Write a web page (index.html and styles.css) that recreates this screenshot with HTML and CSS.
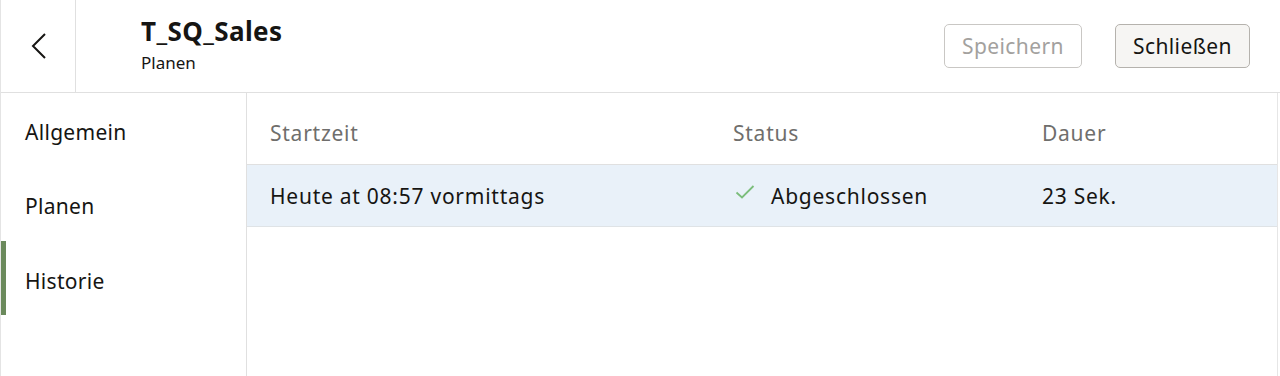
FILE: index.html
```html
<!DOCTYPE html>
<html lang="de">
<head>
<meta charset="utf-8">
<title>T_SQ_Sales</title>
<link rel="stylesheet" href="styles.css">
</head>
<body>
<div class="page">
  <header class="header">
    <div class="back">
      <svg width="16" height="26" viewBox="0 0 16 26"><path d="M14 1 L2 13 L14 25" fill="none" stroke="#161513" stroke-width="2"/></svg>
    </div>
    <div class="titles">
      <div class="title">T_SQ_Sales</div>
      <div class="subtitle">Planen</div>
    </div>
    <div class="actions">
      <button class="btn btn-disabled">Speichern</button>
      <button class="btn btn-main">Schließen</button>
    </div>
  </header>
  <div class="body">
    <nav class="nav">
      <div class="nav-item">Allgemein</div>
      <div class="nav-item">Planen</div>
      <div class="nav-item active">Historie</div>
    </nav>
    <main class="content">
      <div class="row head">
        <div class="c1">Startzeit</div>
        <div class="c2">Status</div>
        <div class="c3">Dauer</div>
      </div>
      <div class="row data">
        <div class="c1">Heute at 08:57 vormittags</div>
        <div class="c2"><svg class="check" width="20" height="16" viewBox="0 0 20 16"><path d="M1.5 8.5 L7 13.5 L18.5 2" fill="none" stroke="#7bbd7b" stroke-width="1.8"/></svg>Abgeschlossen</div>
        <div class="c3">23 Sek.</div>
      </div>
    </main>
  </div>
</div>
</body>
</html>
```
FILE: styles.css
```css
* { box-sizing: border-box; }
html, body { margin: 0; padding: 0; background: #fff; }
body {
  font-family: "Noto Sans", "Open Sans", sans-serif;
  color: #161513;
  width: 1280px;
  height: 376px;
  overflow: hidden;
}
.page { border-left: 1px solid #e4e4e4; height: 376px; }
.header {
  display: flex;
  align-items: stretch;
  height: 93px;
  border-bottom: 1px solid #e0e0e0;
}
.back {
  width: 75px;
  border-right: 1px solid #e0e0e0;
  display: flex;
  align-items: center;
  justify-content: center;
  padding-left: 2px;
  padding-bottom: 1px;
}
.titles {
  padding-left: 65px;
  padding-top: 13px;
  flex: 1;
}
.title {
  font-weight: 700;
  font-size: 26px;
  line-height: 36px;
  letter-spacing: 0.4px;
}
.subtitle {
  font-size: 17px;
  line-height: 24px;
  margin-top: 2px;
}
.actions {
  display: flex;
  gap: 33px;
  padding-top: 24px;
  padding-right: 30px;
}
.btn {
  height: 44px;
  font-family: inherit;
  font-size: 21px;
  letter-spacing: 0.4px;
  border-radius: 5px;
  padding: 0 10px;
}
.btn-disabled {
  width: 138px;
  background: #fff;
  border: 1px solid #c9c7c4;
  color: #a3a19e;
}
.btn-main {
  width: 135px;
  background: #f6f5f3;
  border: 1px solid #b5b2ad;
  color: #161513;
}
.body { display: flex; height: 283px; }
.nav {
  width: 246px;
  border-right: 1px solid #e0e0e0;
}
.nav-item {
  height: 74px;
  display: flex;
  align-items: center;
  padding-left: 19px;
  padding-top: 4px;
  font-size: 21px;
  letter-spacing: 0.3px;
  border-left: 5px solid transparent;
}
.nav-item.active { border-left-color: #6b8a5c; padding-top: 5px; }
.content {
  flex: 1;
  margin-right: 2px;
  border-right: 1px solid #e6e6e6;
}
.row {
  display: grid;
  grid-template-columns: 463px 309px 1fr;
  align-items: center;
  font-size: 21px;
  letter-spacing: 0.75px;
}
.row > div { padding-left: 23px; }
.head {
  height: 72px;
  color: #6f6e6c;
  border-bottom: 1px solid #e0e0e0;
  padding-top: 8px;
}
.data {
  height: 62px;
  background: #e9f1f9;
  border-bottom: 1px solid #dfe3e6;
}
.c2 { display: flex; align-items: center; }
.check { margin-left: 2px; margin-right: 16px; margin-top: -8px; }
```
